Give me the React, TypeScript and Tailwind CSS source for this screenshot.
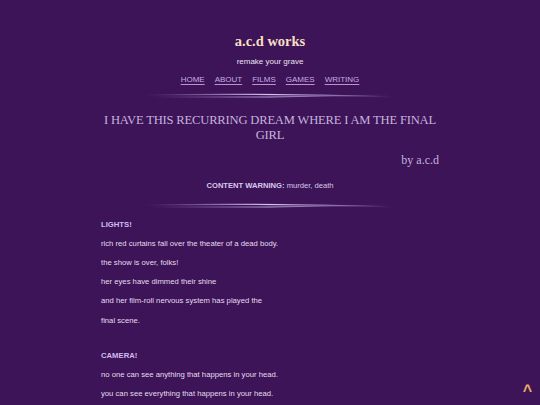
import React from "react";

const NAV = ["HOME", "ABOUT", "FILMS", "GAMES", "WRITING"];

const POEM = [
  {
    title: "LIGHTS!",
    lines: [
      "rich red curtains fall over the theater of a dead body.",
      "the show is over, folks!",
      "her eyes have dimmed their shine",
      "and her film-roll nervous system has played the",
      "final scene.",
    ],
  },
  {
    title: "CAMERA!",
    lines: [
      "no one can see anything that happens in your head.",
      "you can see everything that happens in your head.",
    ],
  },
];

function Swoosh() {
  return (
    <svg width="250" height="8" viewBox="0 0 250 8" className="block mx-auto">
      <defs>
        <linearGradient id="sw" x1="0" x2="1" y1="0" y2="0">
          <stop offset="0" stopColor="#b99be0" stopOpacity="0" />
          <stop offset="0.5" stopColor="#d9c6f5" stopOpacity="1" />
          <stop offset="1" stopColor="#b99be0" stopOpacity="0" />
        </linearGradient>
      </defs>
      <path d="M0 3 Q125 1 250 5" stroke="url(#sw)" strokeWidth="1.2" fill="none" />
      <path d="M5 5 Q125 6 245 3" stroke="url(#sw)" strokeWidth="1" fill="none" opacity="0.8" />
    </svg>
  );
}

export default function App() {
  return (
    <div
      className="min-h-[405px] bg-[#3c1457] relative overflow-hidden"
      style={{ fontFamily: '"Liberation Sans", Arial, sans-serif' }}
    >
      {/* Header */}
      <header className="pt-[32px] text-center">
        <h1
          className="text-[14.5px] font-bold text-[#f6dfc0] leading-[18px]"
          style={{ fontFamily: '"Liberation Serif", serif' }}
        >
          a.c.d works
        </h1>
        <p className="mt-[6px] text-[8px] text-[#ece0f4] leading-[11px]">remake your grave</p>
        <nav className="mt-[7px] flex justify-center gap-[10px] text-[8px] leading-[11px]">
          {NAV.map((n) => (
            <a
              key={n}
              href="#"
              className="text-[#c6ace6] underline decoration-[#c38fc9] underline-offset-[2px]"
            >
              {n}
            </a>
          ))}
        </nav>
        <div className="mt-[7px]">
          <Swoosh />
        </div>
      </header>

      {/* Body */}
      <main className="w-[338px] mx-auto">
        <h2
          className="mt-[13px] text-center text-[12.6px] leading-[15px] text-[#c8b2df] uppercase tracking-[-0.2px]"
          style={{ fontFamily: '"Liberation Serif", serif' }}
        >
          I have this recurring dream where I am the final girl
        </h2>
        <p
          className="mt-[10px] text-right text-[12px] leading-[14px] text-[#c8b2df]"
          style={{ fontFamily: '"Liberation Serif", serif' }}
        >
          by a.c.d
        </p>
        <p className="mt-[14px] text-center text-[7.6px] leading-[10px] text-[#d9c8ec]">
          <span className="font-bold">CONTENT WARNING:</span> murder, death
        </p>
        <div className="mt-[11px]">
          <Swoosh />
        </div>

        <div className="text-[7.7px] leading-[10px] text-[#e6dcee]">
          {POEM.map((s, i) => (
            <div key={s.title} className={i > 0 ? "mt-[16px]" : "mt-[5px]"}>
              <p className="font-bold text-[#d2bcee] py-[4.6px]">{s.title}</p>
              {s.lines.map((l) => (
                <p key={l} className="py-[4.6px]">
                  {l}
                </p>
              ))}
            </div>
          ))}
        </div>
      </main>

      <a
        href="#"
        className="absolute right-[8px] top-[383px] text-[16px] font-bold text-[#eeaa6a] leading-none"
      >
        ^
      </a>
    </div>
  );
}
